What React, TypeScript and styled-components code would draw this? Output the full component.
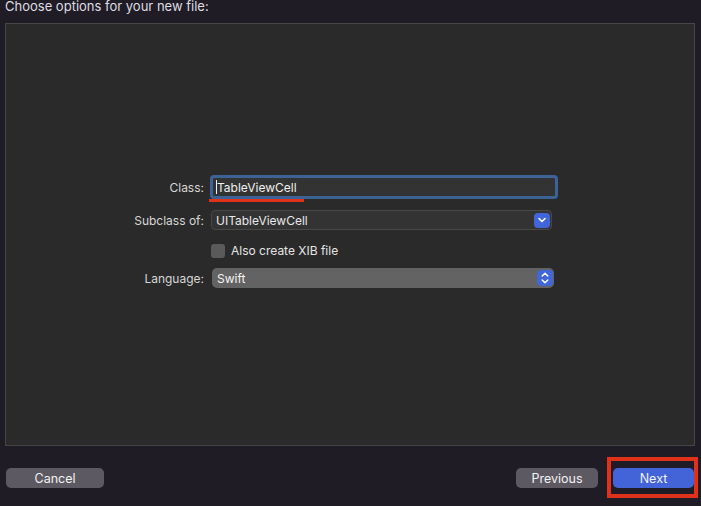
import styled, { createGlobalStyle } from "styled-components";

const GlobalStyle = createGlobalStyle`
  html, body {
    margin: 0;
    padding: 0;
    background: #201c26;
  }
  body {
    font-family: "Inter", "Liberation Sans", sans-serif;
    -webkit-font-smoothing: antialiased;
  }
`;

const ChevronDown = () => (
  <svg width="10" height="8" viewBox="0 0 10 8">
    <path d="M2 2.5 L5 5.5 L8 2.5" fill="none" stroke="#fff" strokeWidth="1.6" strokeLinecap="round" strokeLinejoin="round" />
  </svg>
);

const Stepper = () => (
  <svg width="10" height="14" viewBox="0 0 10 14">
    <path d="M2.2 5 L5 2.2 L7.8 5" fill="none" stroke="#fff" strokeWidth="1.5" strokeLinecap="round" strokeLinejoin="round" />
    <path d="M2.2 9 L5 11.8 L7.8 9" fill="none" stroke="#fff" strokeWidth="1.5" strokeLinecap="round" strokeLinejoin="round" />
  </svg>
);

const App = () => {
  return (
    <Window>
      <GlobalStyle />
      <Title>Choose options for your new file:</Title>
      <Panel>
        <Row $top={0}>
          <Label>Class:</Label>
          <FieldWrap>
            <TextField>
              <Caret />
              TableViewCell
            </TextField>
            <Underline />
          </FieldWrap>
        </Row>

        <Row $top={11}>
          <Label>Subclass of:</Label>
          <ComboBox>
            UITableViewCell
            <ArrowButton>
              <ChevronDown />
            </ArrowButton>
          </ComboBox>
        </Row>

        <Row $top={14}>
          <span />
          <CheckRow>
            <Checkbox />
            Also create XIB file
          </CheckRow>
        </Row>

        <Row $top={11}>
          <Label>Language:</Label>
          <PopUp>
            Swift
            <ArrowButton $tall>
              <Stepper />
            </ArrowButton>
          </PopUp>
        </Row>
      </Panel>
      <Footer>
        <Button $width={98}>Cancel</Button>
        <RightGroup>
          <Button $width={82}>Previous</Button>
          <NextWrap>
            <Button $width={81} $primary>
              Next
            </Button>
            <Highlight />
          </NextWrap>
        </RightGroup>
      </Footer>
    </Window>
  );
};

export default App;

const Window = styled.div`
  width: 701px;
  height: 506px;
  display: flex;
  flex-direction: column;
  overflow: hidden;
`;

const Title = styled.div`
  flex-shrink: 0;
  height: 23px;
  padding-left: 5px;
  font-size: 13px;
  line-height: 13px;
  color: #dedde2;
`;

const Panel = styled.div`
  flex-shrink: 0;
  box-sizing: border-box;
  height: 423px;
  margin: 0 6px 0 5px;
  background: #2a2a2a;
  border: 1px solid #464646;
  padding-top: 151px;
  font-size: 12px;
  color: #dcdcdc;
`;

const Row = styled.div<{ $top: number }>`
  display: grid;
  grid-template-columns: 198px 350px;
  column-gap: 6px;
  align-items: center;
  margin-top: ${(p) => p.$top}px;
`;

const Label = styled.div`
  text-align: right;
  color: #d6d6d6;
`;

const FieldWrap = styled.div`
  position: relative;
  height: 24px;
`;

const TextField = styled.div`
  box-sizing: border-box;
  height: 24px;
  width: 348px;
  border: 3px solid #3d6296;
  border-radius: 4px;
  background: #333333;
  display: flex;
  align-items: center;
  padding-left: 3px;
  color: #f0f0f0;
`;

const Caret = styled.span`
  width: 1px;
  height: 14px;
  background: #f0f0f0;
`;

const Underline = styled.div`
  position: absolute;
  left: -1px;
  top: 24px;
  width: 95px;
  height: 3px;
  background: #e0321b;
`;

const ComboBox = styled.div`
  box-sizing: border-box;
  margin-left: 1px;
  width: 341px;
  height: 20px;
  border: 1px solid #484848;
  border-radius: 4px;
  background: #333333;
  display: flex;
  align-items: center;
  justify-content: space-between;
  padding: 0 1px 0 4px;
  color: #e8e8e8;
`;

const ArrowButton = styled.div<{ $tall?: boolean }>`
  width: 16px;
  height: ${(p) => (p.$tall ? 16 : 15)}px;
  border-radius: 4px;
  background: #4166da;
  display: flex;
  align-items: center;
  justify-content: center;
`;

const CheckRow = styled.div`
  margin-left: 1px;
  height: 13px;
  display: flex;
  align-items: center;
  gap: 6px;
  color: #e4e4e4;
`;

const Checkbox = styled.div`
  width: 14px;
  height: 14px;
  border-radius: 3px;
  background: #5a5a5a;
`;

const PopUp = styled.div`
  box-sizing: border-box;
  margin-left: 2px;
  width: 342px;
  height: 20px;
  border-radius: 5px;
  background: #636363;
  display: flex;
  align-items: center;
  justify-content: space-between;
  padding: 0 1px 0 5px;
  color: #f4f4f4;
`;

const Footer = styled.div`
  flex-shrink: 0;
  display: flex;
  justify-content: space-between;
  align-items: center;
  padding: 0 7px 0 6px;
  margin-top: 22px;
`;

const RightGroup = styled.div`
  display: flex;
  align-items: center;
  gap: 15px;
`;

const NextWrap = styled.div`
  position: relative;
`;

const Highlight = styled.div`
  position: absolute;
  left: -6px;
  top: -11px;
  width: 91px;
  height: 41px;
  box-sizing: border-box;
  border: 4px solid #e0321b;
`;

const Button = styled.div<{ $width: number; $primary?: boolean }>`
  width: ${(p) => p.$width}px;
  height: 20px;
  border-radius: 5px;
  background: ${(p) => (p.$primary ? "#4264d8" : "#5d5962")};
  color: #f2f2f2;
  font-size: 12.5px;
  display: flex;
  align-items: center;
  justify-content: center;
`;
